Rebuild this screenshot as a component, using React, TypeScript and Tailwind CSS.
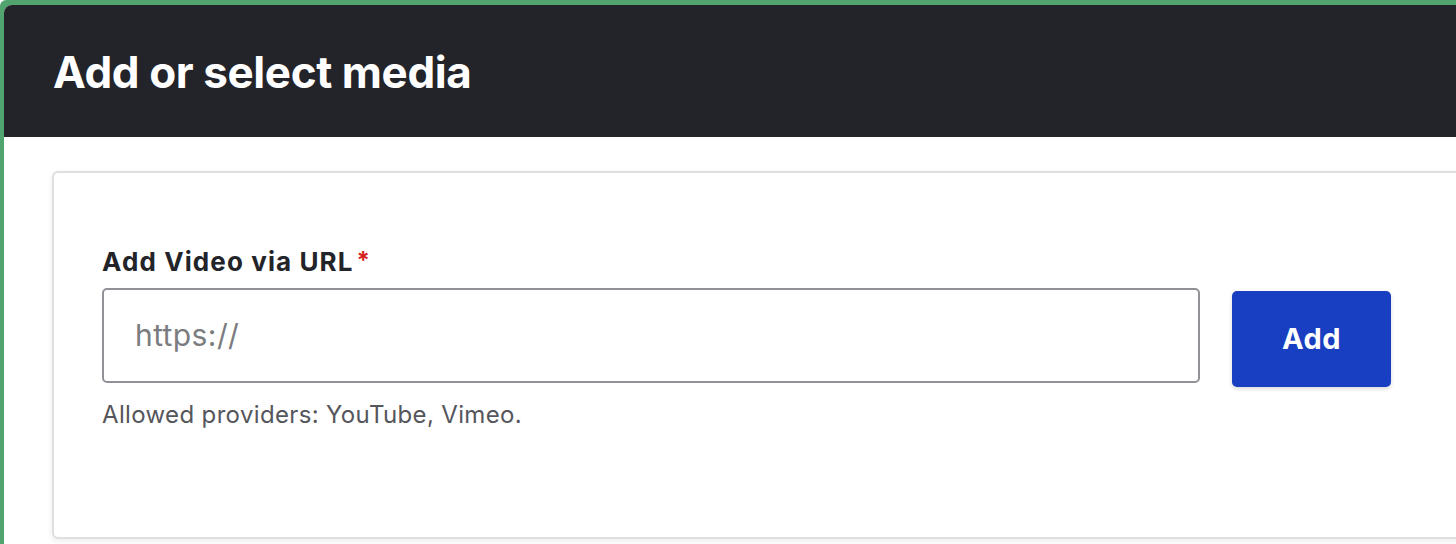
import React from "react";

export default function App() {
  return (
    <div className="w-[1456px] h-[544px] overflow-hidden bg-[#52a46f] pl-[4px] pt-[5px] rounded-tl-[6px]" style={{ fontFamily: "Inter, 'Noto Sans', sans-serif" }}>
      <div className="h-full w-full bg-white rounded-tl-[8px] overflow-hidden">
        <div className="h-[132px] bg-[#232429] flex items-center pl-[49px]">
          <h1 className="text-white font-bold text-[44px] leading-none tracking-[-0.4px] pt-[2px]">Add or select media</h1>
        </div>
        <div className="pt-[34px] pl-[48px]">
          <div className="w-[1440px] h-[368px] bg-white border-2 border-[#dedee3] rounded-[6px] shadow-[0_2px_6px_rgba(0,0,0,0.08)] pl-[48px] pt-[74px]">
            <label className="flex items-start text-[#232429] font-bold text-[26px] leading-[30px] tracking-[1.1px]">
              Add Video via URL
              <span className="text-[#d72222] text-[24px] leading-none ml-[3px] mt-[2px]">*</span>
            </label>
            <div className="flex items-start mt-[11px]">
              <div className="w-[1098px] h-[95px] border-2 border-[#919297] rounded-[5px] flex items-center pl-[31px]">
                <span className="text-[#7b7c80] text-[30px] tracking-[0.4px]">https://</span>
              </div>
              <button className="ml-[32px] mt-[3px] w-[159px] h-[96px] bg-[#183ec1] rounded-[5px] shadow-[0_2px_4px_rgba(0,0,0,0.15)] text-white font-bold text-[29px] tracking-[0.5px]">
                Add
              </button>
            </div>
            <div className="mt-[13px] text-[#55565b] text-[24px] leading-[30px] tracking-[0.35px]">Allowed providers: YouTube, Vimeo.</div>
          </div>
        </div>
      </div>
    </div>
  );
}
